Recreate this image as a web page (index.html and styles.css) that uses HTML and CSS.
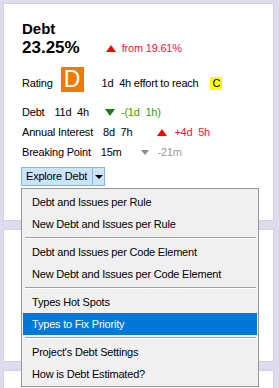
FILE: index.html
```html
<!DOCTYPE html>
<html>

<head>
	<meta charset="UTF-8">
	<meta name="viewport" content="width=device-width, initial-scale=1.0">
	<title>Debt</title>
	<link rel="stylesheet" href="styles.css">
</head>

<body>
	<div class="panel panel-debt">
		<h2 class="title">Debt</h2>
		<div class="headline">
			<span class="big">23.25%</span>
			<span class="tri tri-up red"></span>
			<span class="trend red">from 19.61%</span>
		</div>

		<div class="rating">
			<span>Rating</span>
			<span class="grade grade-d">D</span>
			<span class="effort">1d&nbsp;&nbsp;4h effort to reach</span>
			<span class="grade-c">C</span>
		</div>

		<div class="metric">
			<span class="label">Debt</span>
			<span class="value">11d&nbsp;&nbsp;4h</span>
			<span class="tri tri-down green delta-debt"></span>
			<span class="green-text">-(1d&nbsp;&nbsp;1h)</span>
		</div>
		<div class="metric">
			<span class="label">Annual Interest</span>
			<span class="value">8d&nbsp;&nbsp;7h</span>
			<span class="tri tri-up red delta-interest"></span>
			<span class="red">+4d&nbsp;&nbsp;5h</span>
		</div>
		<div class="metric">
			<span class="label">Breaking Point</span>
			<span class="value">15m</span>
			<span class="tri tri-small gray delta-break"></span>
			<span class="gray-text">-21m</span>
		</div>

		<div class="split-btn">
			<span class="split-main">Explore Debt</span>
			<span class="split-arrow"><span class="caret"></span></span>
		</div>
	</div>

	<div class="panel panel-mid"></div>
	<div class="panel panel-low"></div>

	<ul class="menu">
		<li>Debt and Issues per Rule</li>
		<li>New Debt and Issues per Rule</li>
		<li class="sep"></li>
		<li>Debt and Issues per Code Element</li>
		<li>New Debt and Issues per Code Element</li>
		<li class="sep"></li>
		<li>Types Hot Spots</li>
		<li class="active">Types to Fix Priority</li>
		<li class="sep"></li>
		<li>Project's Debt Settings</li>
		<li>How is Debt Estimated?</li>
	</ul>
</body>

</html>
```

FILE: styles.css
```css
html {
	box-sizing: border-box;
	font-size: 11px;
}

*,
*:before,
*:after {
	box-sizing: inherit;
}

body,
h2,
ul {
	margin: 0;
	padding: 0;
	font-weight: normal;
}

body {
	padding: 3px 5px 0 3px;
	height: 388px;
	overflow: hidden;
	background: #dcdcec;
	color: #000;
	font-family: "Liberation Sans", Arial, sans-serif;
	letter-spacing: -0.2px;
	display: flex;
	flex-direction: column;
	gap: 8px;
}

.panel {
	background: #fff;
	border: 1px solid #d2d2e2;
	flex-shrink: 0;
}

.panel-debt {
	height: 218px;
	padding: 16px 18px 0;
}

.panel-mid {
	height: 133px;
}

.panel-low {
	flex: 1;
	border-bottom: 0;
}

.title {
	font-size: 15px;
	font-weight: bold;
	line-height: 18px;
	letter-spacing: 0;
}

.headline {
	display: flex;
	align-items: center;
	height: 20px;
}

.big {
	font-size: 17px;
	font-weight: bold;
	letter-spacing: 0;
	margin-right: 26px;
}

.trend {
	margin-left: 6px;
}

.red {
	color: #f5143c;
}

.green-text {
	color: #3a9a22;
}

.gray-text {
	color: #9a9a9a;
}

/* little trend arrows */
.tri {
	display: inline-block;
	width: 0;
	height: 0;
	border-left: 5px solid transparent;
	border-right: 5px solid transparent;
}

.tri-up {
	border-bottom: 7px solid #f00;
}

.tri-down {
	border-top: 7px solid #1d7d12;
}

.tri-small {
	border-left-width: 4px;
	border-right-width: 4px;
	border-top: 5px solid #8a8a8a;
}

.rating {
	display: flex;
	align-items: baseline;
	margin-top: 9px;
	height: 25px;
}

.grade {
	display: inline-block;
	width: 23px;
	height: 25px;
	line-height: 25px;
	text-align: center;
	color: #fff;
	font-size: 23px;
	letter-spacing: 0;
	margin-left: 8px;
}

.grade-d {
	background: #f07a00;
}

.effort {
	margin-left: 18px;
}

.grade-c {
	background: #ffff00;
	padding: 0 2px 0 3px;
	margin-left: 11px;
	line-height: 13px;
}

.metric {
	display: flex;
	align-items: center;
	height: 20px;
}

.rating + .metric {
	margin-top: 10px;
}

.value {
	margin-left: 10px;
}

.delta-debt {
	margin: 0 6px 0 16px;
}

.delta-interest {
	margin: 0 7px 0 25px;
}

.delta-break {
	margin: 0 9px 0 19px;
}

.split-btn {
	display: flex;
	margin: 5px 0 0 -1px;
	width: 84px;
	height: 19px;
	border: 1px solid #84b8e8;
	background: #cce4f7;
}

.split-main {
	flex: 1;
	padding-left: 4px;
	line-height: 17px;
}

.split-arrow {
	width: 12px;
	border-left: 1px solid #84b8e8;
	display: flex;
	align-items: center;
	justify-content: center;
}

.caret {
	width: 0;
	height: 0;
	border-left: 4px solid transparent;
	border-right: 4px solid transparent;
	border-top: 4px solid #000;
}

/* dropdown, lies over the panels */
.menu {
	position: absolute;
	top: 188px;
	left: 21px;
	width: 238px;
	list-style: none;
	background: #f0f0f0;
	border: 1px solid #979797;
	padding: 2px 1px 1px;
}

.menu li {
	height: 22px;
	line-height: 22px;
	padding-left: 9px;
}

.menu li.active {
	background: #0078d7;
	color: #fff;
}

.menu li.sep {
	height: 6px;
	padding: 0;
	margin: 0 1px 0 2px;
	position: relative;
}

.menu li.sep:after {
	content: "";
	position: absolute;
	left: 0;
	right: 0;
	top: 2px;
	height: 2px;
	background: #a0a0a0;
	border-bottom: 1px solid #fff;
}
```
